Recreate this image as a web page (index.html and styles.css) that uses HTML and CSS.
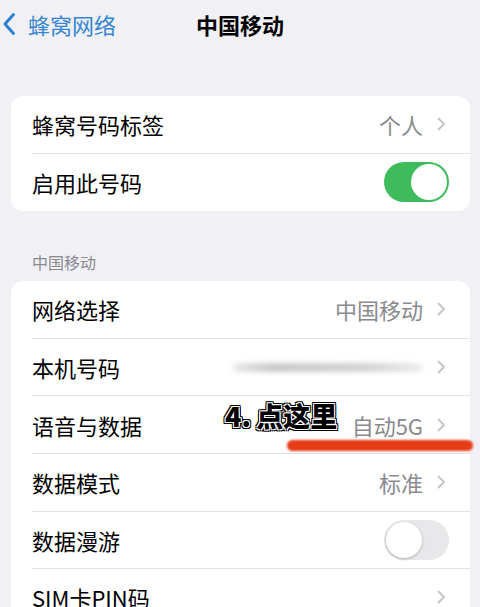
FILE: index.html
```html
<!DOCTYPE html>
<html lang="zh-CN">
<head>
<meta charset="utf-8">
<link rel="stylesheet" href="styles.css">
</head>
<body>
<div class="page">
  <div class="nav">
    <div class="back">
      <svg class="back-icon" width="14" height="24" viewBox="0 0 14 24"><polyline points="11.5,2.5 3,12 11.5,21.5" fill="none" stroke="#2c7fd6" stroke-width="3" stroke-linecap="round" stroke-linejoin="round"/></svg>
      <span class="back-text">蜂窝网络</span>
    </div>
    <div class="title">中国移动</div>
    <div></div>
  </div>

  <div class="card card-first">
    <div class="row"><div class="row-inner">
      <span class="label">蜂窝号码标签</span>
      <span class="value">个人</span>
      <svg class="chev" width="9" height="14" viewBox="0 0 9 14"><polyline points="1.5,1.5 7,7 1.5,12.5" fill="none" stroke="#c4c4c7" stroke-width="1.8" stroke-linecap="round" stroke-linejoin="round"/></svg>
    </div></div>
    <div class="row"><div class="row-inner toggle-row">
      <span class="label">启用此号码</span>
      <span class="toggle on"><span class="knob"></span></span>
    </div></div>
  </div>

  <div class="section-header">中国移动</div>

  <div class="card">
    <div class="row"><div class="row-inner">
      <span class="label">网络选择</span>
      <span class="value">中国移动</span>
      <svg class="chev" width="9" height="14" viewBox="0 0 9 14"><polyline points="1.5,1.5 7,7 1.5,12.5" fill="none" stroke="#c4c4c7" stroke-width="1.8" stroke-linecap="round" stroke-linejoin="round"/></svg>
    </div></div>
    <div class="row"><div class="row-inner">
      <span class="label">本机号码</span>
      <span class="blurred"></span>
      <svg class="chev" width="9" height="14" viewBox="0 0 9 14"><polyline points="1.5,1.5 7,7 1.5,12.5" fill="none" stroke="#c4c4c7" stroke-width="1.8" stroke-linecap="round" stroke-linejoin="round"/></svg>
    </div></div>
    <div class="row row-marked"><div class="row-inner">
      <span class="label">语音与数据</span>
      <span class="value">自动5G</span>
      <svg class="chev" width="9" height="14" viewBox="0 0 9 14"><polyline points="1.5,1.5 7,7 1.5,12.5" fill="none" stroke="#c4c4c7" stroke-width="1.8" stroke-linecap="round" stroke-linejoin="round"/></svg>
    </div>
      <span class="note">4.&thinsp;点这里</span>
      <span class="red-mark"></span>
    </div>
    <div class="row"><div class="row-inner">
      <span class="label">数据模式</span>
      <span class="value">标准</span>
      <svg class="chev" width="9" height="14" viewBox="0 0 9 14"><polyline points="1.5,1.5 7,7 1.5,12.5" fill="none" stroke="#c4c4c7" stroke-width="1.8" stroke-linecap="round" stroke-linejoin="round"/></svg>
    </div></div>
    <div class="row"><div class="row-inner toggle-row">
      <span class="label">数据漫游</span>
      <span class="toggle off"><span class="knob"></span></span>
    </div></div>
    <div class="row"><div class="row-inner last">
      <span class="label">SIM卡PIN码</span>
      <span class="value"></span>
      <svg class="chev" width="9" height="14" viewBox="0 0 9 14"><polyline points="1.5,1.5 7,7 1.5,12.5" fill="none" stroke="#c4c4c7" stroke-width="1.8" stroke-linecap="round" stroke-linejoin="round"/></svg>
    </div></div>
  </div>
</div>
</body>
</html>
```

FILE: styles.css
```css
html, body {
  margin: 0;
  padding: 0;
  background: #f0f0f5;
}
body {
  font-family: "Noto Sans CJK SC", "Noto Sans", sans-serif;
  color: #000;
  width: 480px;
  height: 607px;
  overflow: hidden;
}
.page {
  display: flex;
  flex-direction: column;
}
.nav {
  height: 48px;
  display: grid;
  grid-template-columns: 1fr auto 1fr;
  align-items: center;
}
.back {
  display: flex;
  align-items: center;
  padding-left: 2px;
  gap: 12px;
}
.back-icon {
  display: block;
}
.back-text {
  color: #3686d2;
  font-size: 22px;
  line-height: 30px;
}
.title {
  font-size: 22px;
  font-weight: 700;
  line-height: 30px;
}
.card {
  background: #fff;
  margin: 0 10px 0 11px;
  border-radius: 12px;
}
.card-first {
  margin-top: 48px;
}
.row {
  padding-left: 21px;
  position: relative;
}
.row-inner {
  height: 56.6px;
  display: flex;
  align-items: center;
  border-bottom: 1px solid #e3e3e6;
  padding-right: 24px;
}
.row-inner.last,
.card-first .row:last-child .row-inner {
  border-bottom: none;
}
.card-first .row:last-child .row-inner {
  height: 57.6px;
}
.label {
  font-size: 22px;
  line-height: 30px;
  flex: 1;
  white-space: nowrap;
}
.value {
  font-size: 22px;
  line-height: 30px;
  color: #8a8a8e;
  margin-right: 14px;
}
.chev {
  display: block;
}
.toggle-row {
  padding-right: 21px;
}
.toggle {
  width: 65px;
  height: 40px;
  border-radius: 20px;
  position: relative;
  box-sizing: border-box;
}
.toggle.on {
  background: #3ebc5c;
}
.toggle.off {
  background: #e8e8ea;
}
.knob {
  position: absolute;
  top: 2px;
  width: 36px;
  height: 36px;
  border-radius: 50%;
  background: #fff;
  box-sizing: border-box;
}
.toggle.on .knob {
  right: 2px;
}
.toggle.off .knob {
  left: 2px;
  box-shadow: 0 1px 3px rgba(0,0,0,0.25);
}
.section-header {
  font-size: 16px;
  line-height: 22px;
  color: #8a8a8e;
  padding: 40px 32px 8px;
}
.blurred {
  width: 190px;
  height: 9px;
  margin-right: 14px;
  border-radius: 5px;
  background: linear-gradient(90deg, rgba(180,180,180,0.3), #c8c8c8 20%, #d2d2d2 70%, rgba(210,210,210,0.4));
  filter: blur(2.5px);
}
.note {
  position: absolute;
  left: 214px;
  top: 5px;
  font-size: 27px;
  line-height: 30px;
  font-weight: 900;
  color: #000;
  white-space: nowrap;
  text-shadow:
    -1px -1px 0 #fff, 1px -1px 0 #fff, -1px 1px 0 #fff, 1px 1px 0 #fff,
    -2px 0 0 #000, 2px 0 0 #000, 0 -2px 0 #000, 0 2px 0 #000,
    -2px -2px 0 #000, 2px 2px 0 #000, -2px 2px 0 #000, 2px -2px 0 #000;
}
.red-mark {
  position: absolute;
  left: 276px;
  top: 44px;
  width: 186px;
  height: 11px;
  border-radius: 6px;
  background: #e43d17;
  filter: blur(1px);
}
```
